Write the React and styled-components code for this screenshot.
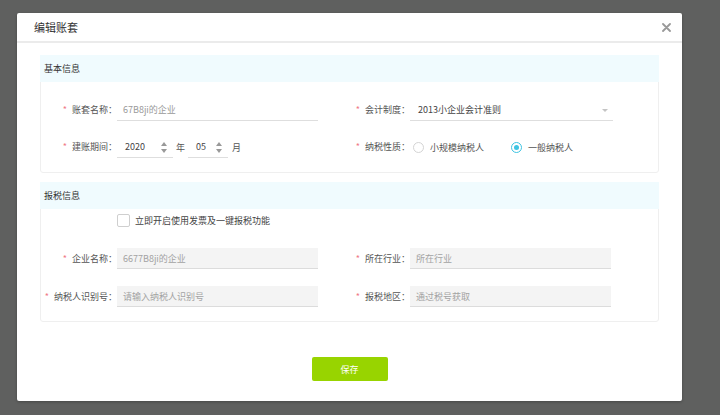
import React from "react";
import styled, { createGlobalStyle } from "styled-components";

const Global = createGlobalStyle`
  html, body { margin: 0; padding: 0; }
  body {
    background: #5f605f;
    font-family: "Noto Sans CJK SC", "Noto Sans", sans-serif;
    width: 720px;
    height: 415px;
    overflow: hidden;
  }
`;

const Page = styled.div`
  padding: 13px 0 0 17px;
`;

const Dialog = styled.div`
  width: 665px;
  height: 388px;
  background: #fff;
  border-radius: 2px;
  box-sizing: border-box;
  display: flex;
  flex-direction: column;
  box-shadow: 0 1px 3px rgba(0,0,0,0.25);
`;

const Header = styled.div`
  height: 28px;
  border-bottom: 2px solid #ebebeb;
  display: flex;
  align-items: center;
  justify-content: space-between;
  padding: 0 11px 0 17px;
`;

const Title = styled.div`
  font-size: 11px;
  color: #333;
  line-height: 14px;
`;

const Close = styled.button`
  border: 0;
  background: none;
  padding: 0;
  width: 10px;
  height: 10px;
  display: flex;
  align-items: center;
  justify-content: center;
  cursor: pointer;
`;

const Body = styled.div`
  padding: 12px 23px 0 23px;
  display: flex;
  flex-direction: column;
  gap: 9px;
`;

const Section = styled.div`
  border: 1px solid #efefef;
  border-radius: 3px;
  display: flex;
  flex-direction: column;
`;

const SectionHead = styled.div`
  height: 27px;
  background: #f0fbfe;
  display: flex;
  align-items: center;
  font-size: 9px;
  color: #333;
  margin: -1px -1px 0 -1px;
  padding-left: 4px;
`;

const SectionBody = styled.div`
  display: flex;
  flex-direction: column;
  padding: ${(p) => p.$pad};
  gap: ${(p) => p.$gap};
`;

const Row = styled.div`
  display: grid;
  grid-template-columns: 277px 279px;
  column-gap: 16px;
  height: ${(p) => p.$h || "22px"};
  margin-top: ${(p) => p.$mt || "0"};
  align-items: center;
`;

const Field = styled.div`
  display: flex;
  align-items: center;
  height: 100%;
`;

const Label = styled.div`
  width: 76px;
  flex: none;
  text-align: right;
  font-size: 9px;
  color: #555;
  white-space: nowrap;
  line-height: 12px;
`;

const Star = styled.span`
  color: #f07a86;
  margin-right: 5px;
  font-size: 9px;
`;

const LineInput = styled.div`
  width: ${(p) => p.$w};
  flex: none;
  height: 22px;
  box-sizing: border-box;
  border-bottom: 1px solid #dedede;
  display: flex;
  align-items: center;
  padding: 0 6px 0 ${(p) => p.$pl || "6px"};
  font-size: 9px;
  color: ${(p) => (p.$muted ? "#9a9a9a" : "#444")};
  position: relative;
`;

const GreyInput = styled.div`
  width: ${(p) => p.$w};
  height: 21px;
  box-sizing: border-box;
  background: #f4f4f4;
  border-bottom: 1px solid #dcdcdc;
  display: flex;
  align-items: center;
  padding-left: 6px;
  font-size: 9px;
  color: #a3a3a3;
`;

const Caret = styled.span`
  position: absolute;
  right: 5px;
  top: 10px;
  width: 0;
  height: 0;
  border-left: 3px solid transparent;
  border-right: 3px solid transparent;
  border-top: 3px solid #c4c4c4;
`;

const Spinner = styled.span`
  position: absolute;
  right: ${(p) => p.$r};
  top: 6px;
  display: flex;
  flex-direction: column;
  gap: 3px;
`;

const Tri = styled.span`
  width: 0;
  height: 0;
  border-left: 3.5px solid transparent;
  border-right: 3.5px solid transparent;
  ${(p) => (p.$up ? "border-bottom: 4px solid #999;" : "border-top: 4px solid #999;")}
`;

const Unit = styled.span`
  font-size: 9px;
  color: #555;
  margin: 0 ${(p) => p.$mr || "0"} 0 ${(p) => p.$ml || "3px"};
`;

const Radios = styled.div`
  display: flex;
  align-items: center;
  padding-left: 3px;
  gap: 27px;
`;

const RadioItem = styled.label`
  display: flex;
  align-items: center;
  gap: 6px;
  font-size: 9px;
  color: #555;
`;

const RadioDot = styled.span`
  width: 11px;
  height: 11px;
  box-sizing: border-box;
  border-radius: 50%;
  border: 1px solid ${(p) => (p.$on ? "#3ec4e2" : "#d4d4d4")};
  display: flex;
  align-items: center;
  justify-content: center;
  &::after {
    content: "";
    width: 5px;
    height: 5px;
    border-radius: 50%;
    background: ${(p) => (p.$on ? "#3ec4e2" : "transparent")};
  }
`;

const CheckRow = styled.div`
  display: flex;
  align-items: center;
  height: 14px;
  padding-left: 76px;
  gap: 5px;
  font-size: 9px;
  color: #444;
`;

const CheckBox = styled.span`
  width: 11px;
  height: 11px;
  border: 1px solid #cfcfcf;
  border-radius: 2px;
  background: #fff;
`;

const Footer = styled.div`
  display: flex;
  justify-content: center;
  padding-top: 35px;
`;

const SaveBtn = styled.button`
  width: 76px;
  height: 24px;
  border: 0;
  border-radius: 2px;
  background: #98d400;
  color: #fff;
  font-family: inherit;
  font-size: 9px;
  cursor: pointer;
`;

export default function App() {
  return (
    <>
      <Global />
      <Page>
        <Dialog>
          <Header>
            <Title>编辑账套</Title>
            <Close aria-label="close">
              <svg width="9" height="9" viewBox="0 0 9 9">
                <path d="M1 1L8 8M8 1L1 8" stroke="#999" strokeWidth="1.8" strokeLinecap="round" />
              </svg>
            </Close>
          </Header>
          <Body>
            <Section>
              <SectionHead>基本信息</SectionHead>
              <SectionBody $pad="17px 0 14px 0" $gap="15px">
                <Row>
                  <Field>
                    <Label><Star>*</Star>账套名称：</Label>
                    <LineInput $w="201px" $muted>67B8ji的企业</LineInput>
                  </Field>
                  <Field>
                    <Label><Star>*</Star>会计制度：</Label>
                    <LineInput $w="203px" $pl="8px">
                      2013小企业会计准则
                      <Caret />
                    </LineInput>
                  </Field>
                </Row>
                <Row>
                  <Field>
                    <Label><Star>*</Star>建账期间：</Label>
                    <LineInput $w="56px" $pl="8px">
                      2020
                      <Spinner $r="6px"><Tri $up /><Tri /></Spinner>
                    </LineInput>
                    <Unit $ml="3px" $mr="3px">年</Unit>
                    <LineInput $w="40px" $pl="8px">
                      05
                      <Spinner $r="6px"><Tri $up /><Tri /></Spinner>
                    </LineInput>
                    <Unit $ml="4px">月</Unit>
                  </Field>
                  <Field>
                    <Label><Star>*</Star>纳税性质：</Label>
                    <Radios>
                      <RadioItem><RadioDot />小规模纳税人</RadioItem>
                      <RadioItem><RadioDot $on />一般纳税人</RadioItem>
                    </Radios>
                  </Field>
                </Row>
              </SectionBody>
            </Section>
            <Section>
              <SectionHead>报税信息</SectionHead>
              <SectionBody $pad="4px 0 14px 0" $gap="17px">
                <CheckRow><CheckBox />立即开启使用发票及一键报税功能</CheckRow>
                <Row $h="21px" $mt="4px">
                  <Field>
                    <Label><Star>*</Star>企业名称：</Label>
                    <GreyInput $w="201px">6677B8ji的企业</GreyInput>
                  </Field>
                  <Field>
                    <Label><Star>*</Star>所在行业：</Label>
                    <GreyInput $w="201px">所在行业</GreyInput>
                  </Field>
                </Row>
                <Row $h="21px">
                  <Field>
                    <Label><Star>*</Star>纳税人识别号：</Label>
                    <GreyInput $w="201px">请输入纳税人识别号</GreyInput>
                  </Field>
                  <Field>
                    <Label><Star>*</Star>报税地区：</Label>
                    <GreyInput $w="201px">通过税号获取</GreyInput>
                  </Field>
                </Row>
              </SectionBody>
            </Section>
          </Body>
          <Footer>
            <SaveBtn>保存</SaveBtn>
          </Footer>
        </Dialog>
      </Page>
    </>
  );
}
